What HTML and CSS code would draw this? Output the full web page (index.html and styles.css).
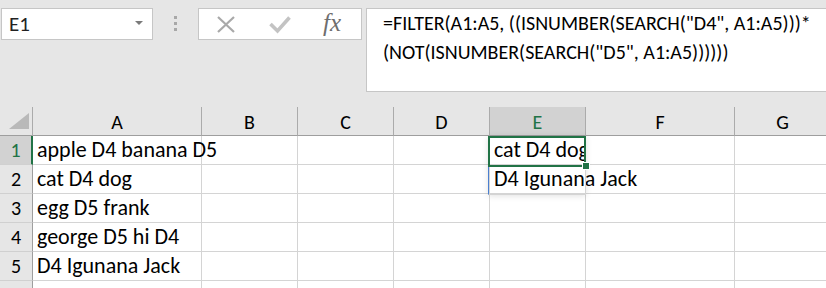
FILE: index.html
```html
<!DOCTYPE html>
<html lang="en">
<head>
  <meta charset="UTF-8">
  <meta name="viewport" content="width=device-width, initial-scale=1.0">
  <title>FILTER sheet</title>
  <link rel="stylesheet" href="styles.css">
</head>
<body>

  <div class="toolbar">
    <div class="namebox">
      <span>E1</span>
      <span class="caret"></span>
    </div>
    <div class="grip">
      <i></i><i></i><i></i>
    </div>
    <div class="buttons">
      <svg class="icon-x" width="18" height="17" viewBox="0 0 18 17">
        <path d="M1 1 L17 16 M17 1 L1 16" stroke="#a9a9a9" stroke-width="2.2" fill="none"/>
      </svg>
      <svg class="icon-check" width="22" height="18" viewBox="0 0 22 18">
        <path d="M1.5 8 L8.5 15 L20.5 1.5" stroke="#c3c3c3" stroke-width="3.6" fill="none"/>
      </svg>
      <span class="fx">fx</span>
    </div>
    <div class="formula">=FILTER(A1:A5, ((ISNUMBER(SEARCH("D4", A1:A5)))*<br>(NOT(ISNUMBER(SEARCH("D5", A1:A5))))))</div>
  </div>

  <div class="sheet">
    <div class="corner"><span class="tri"></span></div>
    <div class="colhead">A</div>
    <div class="colhead">B</div>
    <div class="colhead">C</div>
    <div class="colhead">D</div>
    <div class="colhead active">E</div>
    <div class="colhead">F</div>
    <div class="colhead">G</div>

    <div class="rowhead active">1</div>
    <div class="cell">apple D4 banana D5</div>
    <div class="cell"></div>
    <div class="cell"></div>
    <div class="cell"></div>
    <div class="cell current">cat D4 dog</div>
    <div class="cell"></div>
    <div class="cell"></div>

    <div class="rowhead">2</div>
    <div class="cell">cat D4 dog</div>
    <div class="cell"></div>
    <div class="cell"></div>
    <div class="cell"></div>
    <div class="cell">D4 Igunana Jack</div>
    <div class="cell"></div>
    <div class="cell"></div>

    <div class="rowhead">3</div>
    <div class="cell">egg D5 frank</div>
    <div class="cell"></div>
    <div class="cell"></div>
    <div class="cell"></div>
    <div class="cell"></div>
    <div class="cell"></div>
    <div class="cell"></div>

    <div class="rowhead">4</div>
    <div class="cell">george D5 hi D4</div>
    <div class="cell"></div>
    <div class="cell"></div>
    <div class="cell"></div>
    <div class="cell"></div>
    <div class="cell"></div>
    <div class="cell"></div>

    <div class="rowhead">5</div>
    <div class="cell">D4 Igunana Jack</div>
    <div class="cell"></div>
    <div class="cell"></div>
    <div class="cell"></div>
    <div class="cell"></div>
    <div class="cell"></div>
    <div class="cell"></div>

    <div class="rowhead"></div>
    <div class="cell"></div>
    <div class="cell"></div>
    <div class="cell"></div>
    <div class="cell"></div>
    <div class="cell"></div>
    <div class="cell"></div>
    <div class="cell"></div>

    <div class="spill"></div>
  </div>

</body>
</html>
```

FILE: styles.css
```css
body {
  margin: 0;
  padding: 0;
  background: #e6e6e6;
  font-family: Carlito, Lato, "Liberation Sans", sans-serif;
  color: #000;
  overflow: hidden;
  height: 288px;
}
.toolbar {
  display: flex;
  align-items: flex-start;
  height: 107px;
  padding: 8px 0 0 1px;
  box-sizing: border-box;
}
.namebox {
  width: 152px;
  height: 32px;
  box-sizing: border-box;
  background: #fff;
  border: 1px solid #c6c6c6;
  display: flex;
  align-items: center;
  justify-content: space-between;
  padding: 0 9px 0 7px;
  font-size: 21px;
  color: #222;
}
.caret {
  width: 0;
  height: 0;
  border-left: 4px solid transparent;
  border-right: 4px solid transparent;
  border-top: 4px solid #7a7a7a;
  margin-top: -2px;
}
.grip {
  display: flex;
  flex-direction: column;
  gap: 3px;
  margin: 8px 21px 0;
}
.grip i {
  display: block;
  width: 3px;
  height: 3px;
  background: #a8a8a8;
}
.buttons {
  width: 164px;
  height: 32px;
  box-sizing: border-box;
  background: #fff;
  border: 1px solid #c6c6c6;
  display: flex;
  align-items: center;
  padding-left: 18px;
}
.icon-x {
  margin-top: 1px;
}
.icon-check {
  margin-left: 34px;
  margin-top: 2px;
}
.fx {
  margin-left: 32px;
  font-family: "Liberation Serif", serif;
  font-style: italic;
  font-size: 25px;
  color: #6e6e6e;
  margin-top: -3px;
}
.formula {
  flex: 1;
  margin-left: 4px;
  margin-right: -20px;
  height: 84px;
  box-sizing: border-box;
  background: #fff;
  border: 1px solid #c6c6c6;
  padding: 0 0 0 16px;
  font-size: 20px;
  line-height: 29px;
  white-space: nowrap;
}
.sheet {
  position: relative;
  display: grid;
  grid-template-columns: 33px 169px 96px 96px 96px 96px 149px 96px;
  grid-auto-rows: 29px;
  background: #fff;
  font-size: 22px;
}
.sheet > div {
  box-sizing: border-box;
  border-right: 1px solid #d4d4d4;
  border-bottom: 1px solid #d4d4d4;
}
.corner,
.colhead,
.rowhead {
  background: #e6e6e6;
}
.sheet > .corner,
.sheet > .colhead {
  border-right-color: #ababab;
  border-bottom-color: #9e9e9e;
}
.sheet > .rowhead {
  border-right-color: #9e9e9e;
  border-bottom-color: #d0d0d0;
}
.corner {
  position: relative;
}
.tri {
  position: absolute;
  right: 3px;
  bottom: 6px;
  width: 0;
  height: 0;
  border-left: 20px solid transparent;
  border-bottom: 16px solid #b9b9b9;
}
.colhead {
  display: flex;
  align-items: center;
  justify-content: center;
  font-size: 20px;
  padding-top: 2px;
}
.rowhead {
  display: flex;
  align-items: flex-end;
  justify-content: center;
  font-size: 20px;
  padding-bottom: 2px;
}
.colhead.active,
.rowhead.active {
  background: #d2d2d2;
  color: #217346;
}
.sheet > .rowhead.active {
  border-right: 2px solid #217346;
}
.cell {
  display: flex;
  align-items: flex-end;
  padding: 0 0 1px 4px;
  white-space: nowrap;
}
.current {
  overflow: hidden;
}
.spill {
  position: absolute;
  left: 488px;
  top: 29px;
  width: 98px;
  height: 59px;
  box-sizing: border-box;
  border: 1px solid #4a7fd0;
  box-shadow: 0 1px 6px rgba(0, 0, 0, 0.12);
  pointer-events: none;
}
.spill::before {
  content: "";
  position: absolute;
  left: -1px;
  top: -1px;
  width: 98px;
  height: 31px;
  box-sizing: border-box;
  border: 2px solid #217346;
}
.spill::after {
  content: "";
  position: absolute;
  right: -5px;
  top: 25px;
  width: 6px;
  height: 6px;
  background: #217346;
  border: 1px solid #fff;
}
```
